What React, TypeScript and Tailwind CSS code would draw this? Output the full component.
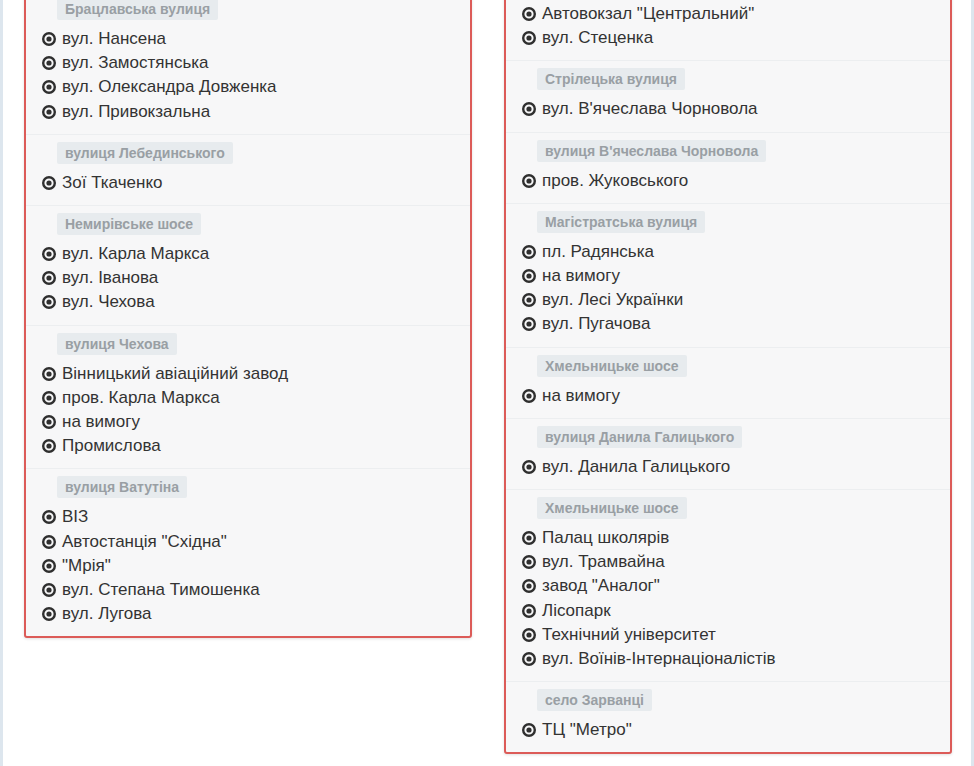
import React from "react";

type Group = { title?: string; items: string[] };

const left: Group[] = [
  { title: "Брацлавська вулиця", items: ["вул. Нансена", "вул. Замостянська", "вул. Олександра Довженка", "вул. Привокзальна"] },
  { title: "вулиця Лебединського", items: ["Зої Ткаченко"] },
  { title: "Немирівське шосе", items: ["вул. Карла Маркса", "вул. Іванова", "вул. Чехова"] },
  { title: "вулиця Чехова", items: ["Вінницький авіаційний завод", "пров. Карла Маркса", "на вимогу", "Промислова"] },
  { title: "вулиця Ватутіна", items: ["ВІЗ", "Автостанція \"Східна\"", "\"Мрія\"", "вул. Степана Тимошенка", "вул. Лугова"] },
];

const right: Group[] = [
  { items: ["Автовокзал \"Центральний\"", "вул. Стеценка"] },
  { title: "Стрілецька вулиця", items: ["вул. В'ячеслава Чорновола"] },
  { title: "вулиця В'ячеслава Чорновола", items: ["пров. Жуковського"] },
  { title: "Магістратська вулиця", items: ["пл. Радянська", "на вимогу", "вул. Лесі Українки", "вул. Пугачова"] },
  { title: "Хмельницьке шосе", items: ["на вимогу"] },
  { title: "вулиця Данила Галицького", items: ["вул. Данила Галицького"] },
  { title: "Хмельницьке шосе", items: ["Палац школярів", "вул. Трамвайна", "завод \"Аналог\"", "Лісопарк", "Технічний університет", "вул. Воїнів-Інтернаціоналістів"] },
  { title: "село Зарванці", items: ["ТЦ \"Метро\""] },
];

function DotCircle() {
  return (
    <svg width="14" height="14" viewBox="0 0 14 14" className="shrink-0">
      <circle cx="7" cy="7" r="5.8" fill="none" stroke="#2f2f2f" strokeWidth="2.4" />
      <circle cx="7" cy="7" r="2.6" fill="#2f2f2f" />
    </svg>
  );
}

function GroupBlock({ g, first, firstPt }: { g: Group; first: boolean; firstPt?: string }) {
  return (
    <div className={(first ? "" : "border-t border-[#eceef0] pt-[7px] ") + (firstPt ?? "") + " pb-[10px] pl-4"}>
      {g.title && (
        <div className="mb-[7px] ml-[15px] flex h-[22px] w-fit items-center rounded-[2px] bg-[#e7ebee] px-2 text-[14px] font-bold leading-[16px] text-[#999fa4]">
          {g.title}
        </div>
      )}
      <div>
        {g.items.map((it, i) => (
          <div key={i} className="flex h-[24.2px] items-center gap-[6px] text-[17px] leading-[24px] text-[#333]">
            <DotCircle />
            <span>{it}</span>
          </div>
        ))}
      </div>
    </div>
  );
}

function Panel({ groups, mt, firstPt }: { groups: Group[]; mt: string; firstPt: string }) {
  return (
    <div className={"w-[448px] shrink-0 rounded-[3px] border-2 border-[#dc5b58] bg-[#f7f7f8] shadow-[0_1px_3px_rgba(0,0,0,0.12)] " + mt}>
      {groups.map((g, i) => (
        <GroupBlock key={i} g={g} first={i === 0} firstPt={i === 0 ? firstPt : undefined} />
      ))}
    </div>
  );
}

export default function App() {
  return (
    <div
      className="flex h-[766px] w-[974px] overflow-hidden bg-white"
      style={{ fontFamily: '"Liberation Sans", Arial, sans-serif' }}
    >
      <div className="w-[3px] shrink-0 bg-[#dde6ee]" />
      <div className="flex flex-1 items-start gap-8 pl-[21px]">
        <Panel groups={left} mt="-mt-[11px]" firstPt="pt-[7px]" />
        <Panel groups={right} mt="-mt-[10px]" firstPt="pt-[10px]" />
      </div>
      <div className="w-[3px] shrink-0 bg-[#dde6ee]" />
    </div>
  );
}
